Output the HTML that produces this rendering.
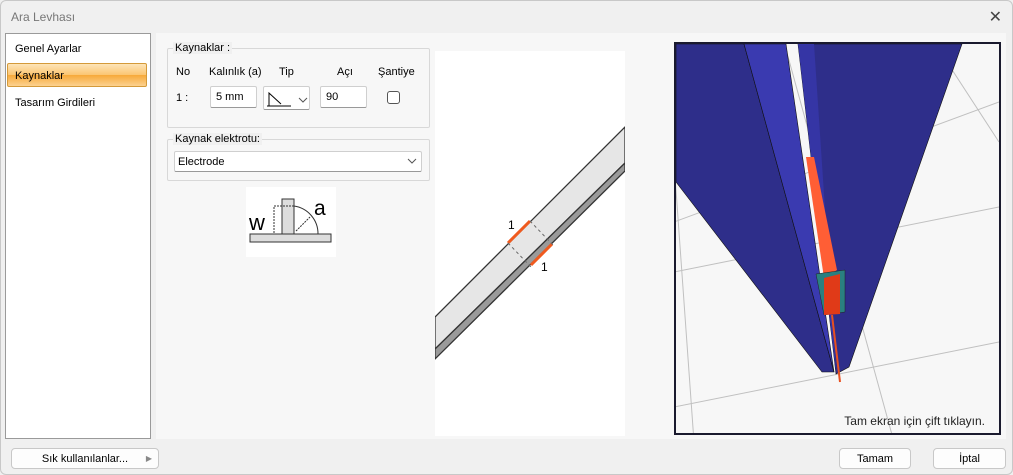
<!DOCTYPE html>
<html><head><meta charset="utf-8"><style>
*{margin:0;padding:0;box-sizing:border-box}
body{width:1013px;height:475px;background:#f0f0f0;font-family:"Liberation Sans",sans-serif;font-size:11px;color:#000;position:relative;overflow:hidden;border:1px solid #c8c8c8;border-radius:6px}
.a{position:absolute}
.title{left:10px;top:9px;font-size:12px;color:#777}
.list{left:4px;top:32px;width:146px;height:406px;background:#fff;border:1px solid #9a9a9a}
.it{position:absolute;left:9px;font-size:11px}
.sel{left:1px;top:29px;width:140px;height:24px;border:1px solid #d49a3a;border-radius:2px;background:linear-gradient(#fde4b8,#fbc571 50%,#f7a93a 51%,#fcd290)}
.grp{border:1px solid #d8d8d8;border-radius:2px}
.lbl{background:#f0f0f0;padding:0 2px}
.inp{background:#fff;border:1px solid #cfcfcf;border-bottom-color:#999;border-radius:2px}
.btn{background:#fdfdfd;border:1px solid #c8c8c8;border-radius:4px;text-align:center;font-size:11px}
</style></head><body>
<div class="a title">Ara Levhası</div>
<div class="a" style="right:10px;top:6px;font-size:16px;color:#444">✕</div>
<div class="a list">
 <div class="it" style="top:9px">Genel Ayarlar</div>
 <div class="a sel"></div>
 <div class="it" style="top:36px">Kaynaklar</div>
 <div class="it" style="top:63px">Tasarım Girdileri</div>
</div>
<div class="a" style="left:155px;top:32px;width:850px;height:406px;background:#f7f7f7"></div>
<div class="a grp" style="left:166px;top:47px;width:263px;height:80px"></div>
<div class="a lbl" style="left:172px;top:41px">Kaynaklar :</div>
<div class="a" style="left:175px;top:65px">No</div>
<div class="a" style="left:208px;top:65px">Kalınlık (a)</div>
<div class="a" style="left:278px;top:65px">Tip</div>
<div class="a" style="left:336px;top:65px">Açı</div>
<div class="a" style="left:377px;top:65px">Şantiye</div>
<div class="a" style="left:175px;top:91px">1 :</div>
<div class="a inp" style="left:209px;top:85px;width:47px;height:22px;padding:4px 5px">5 mm</div>
<div class="a inp" style="left:262px;top:85px;width:47px;height:24px"><svg width="47" height="24"><path d="M3 19H27M5 19V6L17 17" stroke="#000" fill="none"/><path d="M35 11l4 4 4-4" stroke="#555" fill="none"/></svg></div>
<div class="a inp" style="left:319px;top:85px;width:47px;height:22px;padding:4px 5px">90</div>
<div class="a" style="left:386px;top:90px;width:13px;height:13px;border:1px solid #555;border-radius:3px;background:#fff"></div>
<div class="a grp" style="left:166px;top:138px;width:263px;height:42px"></div>
<div class="a lbl" style="left:172px;top:132px">Kaynak elektrotu:</div>
<div class="a inp" style="left:173px;top:150px;width:248px;height:21px;padding:4px 3px">Electrode<svg class="a" style="right:4px;top:6px" width="10" height="7"><path d="M1 1l4 4 4-4" stroke="#555" fill="none"/></svg></div>
<div class="a" style="left:245px;top:186px;width:90px;height:70px;background:#fff"><svg width="90" height="70"><rect x="4" y="47" width="81" height="8" fill="#ddd" stroke="#333"/><rect x="36" y="12" width="12" height="35" fill="#ddd" stroke="#333"/><path d="M48 19A28 28 0 0 1 72 47" fill="none" stroke="#333"/><path d="M28 19H48M28 46V20M50 44L64 30" stroke="#333" stroke-dasharray="2 1" fill="none"/><text x="3" y="43" font-size="22" font-family="Liberation Sans">w</text><text x="68" y="28" font-size="21" font-family="Liberation Sans">a</text></svg></div>
<div class="a" style="left:434px;top:50px;width:190px;height:385px;background:#fff"><svg width="190" height="385">
<polygon points="0,266 190,76 190,112 0,298" fill="#e6e6e6" stroke="#333" stroke-width="1.3"/>
<polygon points="0,298 190,112 190,120 0,308" fill="#9a9a9a" stroke="#333" stroke-width="1.3"/>
<path d="M73 192L95 170M96 214L117 193" stroke="#f05a1e" stroke-width="3"/>
<path d="M95 170L118 194M73 192L96 216" stroke="#666" stroke-dasharray="3 3"/>
<text x="73" y="178" font-size="12" font-family="Liberation Sans">1</text>
<text x="106" y="220" font-size="12" font-family="Liberation Sans">1</text></svg></div>
<div class="a" style="left:673px;top:41px;width:327px;height:393px;border:2px solid #1a1a2e;background:#f7f7f7;overflow:hidden"><svg width="325" height="391" style="position:absolute;left:-2px;top:-2px">
<g stroke="#c0c0c0" fill="none"><path d="M0 230L325 165M0 365L325 300M0 180L325 60M110 0L220 400M0 120L20 400M260 0L325 100"/></g>
<polygon points="2,2 70,2 160,330 148,330 2,140" fill="#2e2e8a" stroke="#111" stroke-width=".6"/>
<polygon points="70,2 112,2 160,330" fill="#3a3ab0" stroke="#111" stroke-width=".6"/>
<polygon points="124,2 288,2 175,325 162,332" fill="#2e2e8a" stroke="#111" stroke-width=".6"/>
<polygon points="124,2 140,2 162,332" fill="#3535a5"/>
<polygon points="132,115 140,115 163,228 150,236" fill="#ff5e35"/>
<polygon points="142,232 171,228 171,270 150,273" fill="#2a8080" stroke="#222" stroke-width=".5"/>
<polygon points="150,236 166,232 166,272 150,273" fill="#e03a18"/>
<path d="M158 273L166 340" stroke="#e85020" stroke-width="2"/>
</svg><div class="a" style="right:14px;bottom:5px;font-size:12px;color:#222">Tam ekran için çift tıklayın.</div></div>
<div class="a btn" style="left:10px;top:447px;width:148px;height:21px;padding-top:4px">Sık kullanılanlar... <span style="position:absolute;right:6px;color:#888;font-size:8px;top:5px">▶</span></div>
<div class="a btn" style="left:838px;top:447px;width:72px;height:21px;padding-top:4px">Tamam</div>
<div class="a btn" style="left:932px;top:447px;width:73px;height:21px;padding-top:4px">İptal</div>
</body></html>
